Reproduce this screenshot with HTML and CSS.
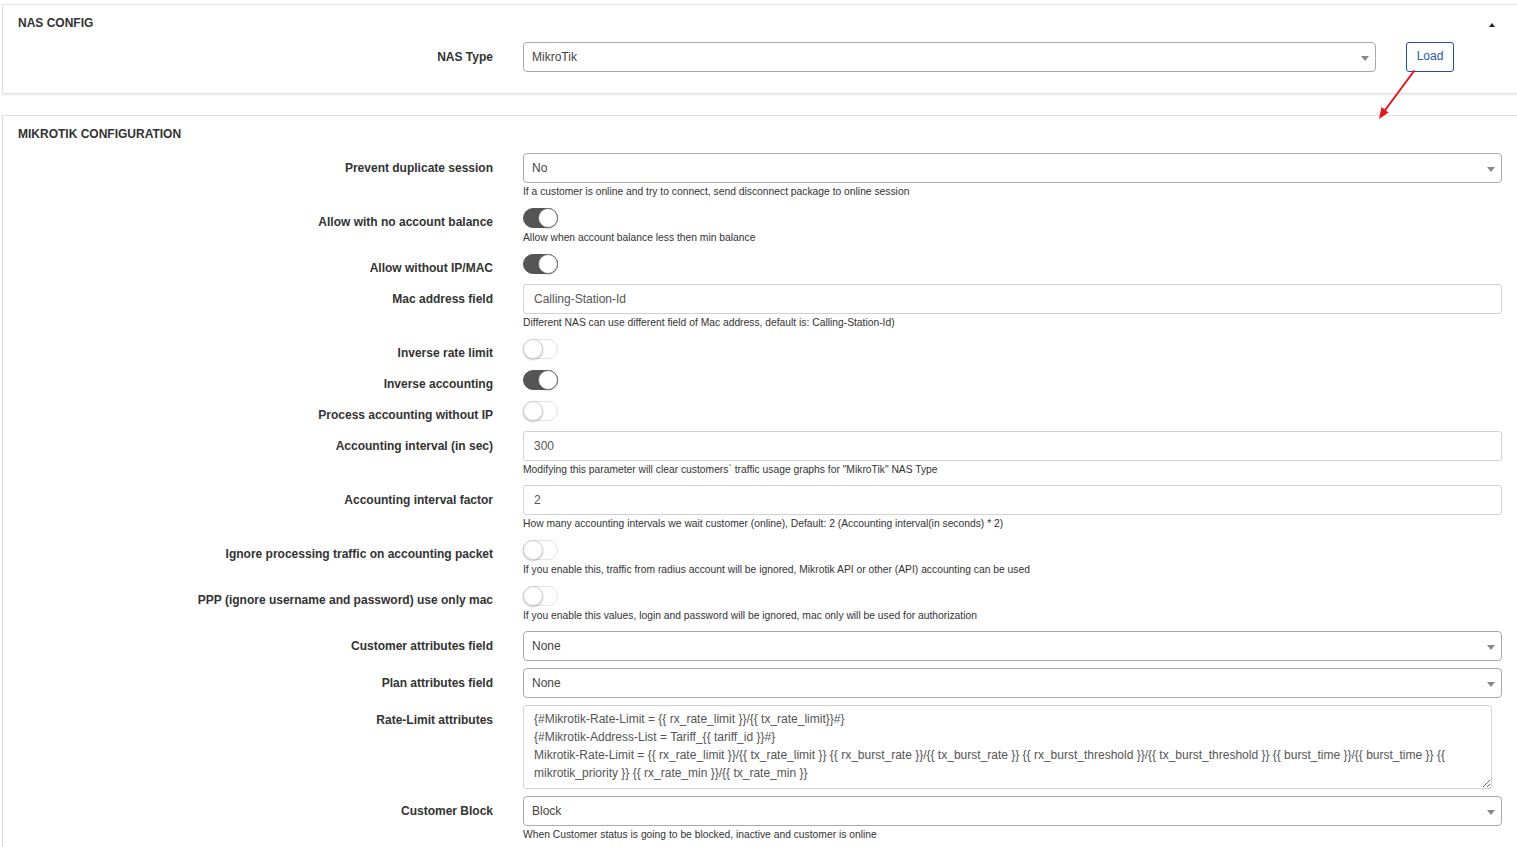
FILE: index.html
```html
<!DOCTYPE html>
<html>
<head>
<meta charset="utf-8">
<link rel="stylesheet" href="styles.css">
</head>
<body>
<div class="page">
  <section class="panel">
    <div class="panel-head">
      <h2>NAS CONFIG</h2>
      <i class="caret-up"></i>
    </div>
    <div class="panel-body first">
      <div class="row">
        <label class="lbl">NAS Type</label>
        <div class="ctl ctl-inline">
          <div class="select narrow"><span>MikroTik</span><i class="arrow"></i></div>
          <button class="btn-load">Load</button>
        </div>
      </div>
    </div>
  </section>

  <section class="panel">
    <div class="panel-head">
      <h2>MIKROTIK CONFIGURATION</h2>
    </div>
    <div class="panel-body">
      <div class="row">
        <label class="lbl">Prevent duplicate session</label>
        <div class="ctl">
          <div class="select"><span>No</span><i class="arrow"></i></div>
          <div class="help">If a customer is online and try to connect, send disconnect package to online session</div>
        </div>
      </div>
      <div class="row">
        <label class="lbl">Allow with no account balance</label>
        <div class="ctl">
          <div class="toggle on"><span class="knob"></span></div>
          <div class="help">Allow when account balance less then min balance</div>
        </div>
      </div>
      <div class="row">
        <label class="lbl">Allow without IP/MAC</label>
        <div class="ctl">
          <div class="toggle on"><span class="knob"></span></div>
        </div>
      </div>
      <div class="row">
        <label class="lbl">Mac address field</label>
        <div class="ctl">
          <div class="input">Calling-Station-Id</div>
          <div class="help">Different NAS can use different field of Mac address, default is: Calling-Station-Id)</div>
        </div>
      </div>
      <div class="row">
        <label class="lbl">Inverse rate limit</label>
        <div class="ctl">
          <div class="toggle"><span class="knob"></span></div>
        </div>
      </div>
      <div class="row">
        <label class="lbl">Inverse accounting</label>
        <div class="ctl">
          <div class="toggle on"><span class="knob"></span></div>
        </div>
      </div>
      <div class="row">
        <label class="lbl">Process accounting without IP</label>
        <div class="ctl">
          <div class="toggle"><span class="knob"></span></div>
        </div>
      </div>
      <div class="row">
        <label class="lbl">Accounting interval (in sec)</label>
        <div class="ctl">
          <div class="input">300</div>
          <div class="help">Modifying this parameter will clear customers` traffic usage graphs for "MikroTik" NAS Type</div>
        </div>
      </div>
      <div class="row">
        <label class="lbl">Accounting interval factor</label>
        <div class="ctl">
          <div class="input">2</div>
          <div class="help">How many accounting intervals we wait customer (online), Default: 2 (Accounting interval(in seconds) * 2)</div>
        </div>
      </div>
      <div class="row">
        <label class="lbl">Ignore processing traffic on accounting packet</label>
        <div class="ctl">
          <div class="toggle"><span class="knob"></span></div>
          <div class="help">If you enable this, traffic from radius account will be ignored, Mikrotik API or other (API) accounting can be used</div>
        </div>
      </div>
      <div class="row">
        <label class="lbl">PPP (ignore username and password) use only mac</label>
        <div class="ctl">
          <div class="toggle"><span class="knob"></span></div>
          <div class="help">If you enable this values, login and password will be ignored, mac only will be used for authorization</div>
        </div>
      </div>
      <div class="row">
        <label class="lbl">Customer attributes field</label>
        <div class="ctl">
          <div class="select"><span>None</span><i class="arrow"></i></div>
        </div>
      </div>
      <div class="row">
        <label class="lbl">Plan attributes field</label>
        <div class="ctl">
          <div class="select"><span>None</span><i class="arrow"></i></div>
        </div>
      </div>
      <div class="row">
        <label class="lbl">Rate-Limit attributes</label>
        <div class="ctl">
          <textarea class="area" readonly>{#Mikrotik-Rate-Limit = {{ rx_rate_limit }}/{{ tx_rate_limit}}#}
{#Mikrotik-Address-List = Tariff_{{ tariff_id }}#}
Mikrotik-Rate-Limit = {{ rx_rate_limit }}/{{ tx_rate_limit }} {{ rx_burst_rate }}/{{ tx_burst_rate }} {{ rx_burst_threshold }}/{{ tx_burst_threshold }} {{ burst_time }}/{{ burst_time }} {{ mikrotik_priority }} {{ rx_rate_min }}/{{ tx_rate_min }}</textarea>
        </div>
      </div>
      <div class="row">
        <label class="lbl">Customer Block</label>
        <div class="ctl">
          <div class="select"><span>Block</span><i class="arrow"></i></div>
          <div class="help">When Customer status is going to be blocked, inactive and customer is online</div>
        </div>
      </div>
    </div>
  </section>
</div>

<svg class="annot-arrow" width="60" height="70" viewBox="0 0 60 70">
  <line x1="44" y1="11" x2="13" y2="53" stroke="#e8141b" stroke-width="2" stroke-linecap="round"/>
  <polygon points="9,59 18.5,52.5 11.5,47" fill="#e8141b"/>
</svg>
</body>
</html>
```

FILE: styles.css
```css
* { box-sizing: border-box; }

html, body {
  margin: 0;
  padding: 0;
  background: #ffffff;
  overflow: hidden;
}

body {
  font-family: "Liberation Sans", Arial, sans-serif;
  color: #333333;
  font-size: 12px;
  position: relative;
}

.page {
  padding: 4px 0 0 2px;
  width: 1540px;
}

.panel {
  width: 1517px;
  background: #ffffff;
  border: 1px solid #e1e1e1;
  box-shadow: 0 1px 2px rgba(0, 0, 0, 0.08);
  padding: 0 16px 0 15px;
}

.panel + .panel {
  margin-top: 21px;
}

.panel-head {
  display: flex;
  justify-content: space-between;
  align-items: center;
  padding: 11px 0 12px 0;
}

.panel-head h2 {
  margin: 0;
  font-size: 12px;
  line-height: 14px;
  font-weight: bold;
  color: #333333;
}

.caret-up {
  display: block;
  width: 0;
  height: 0;
  border-left: 3.5px solid transparent;
  border-right: 3.5px solid transparent;
  border-bottom: 4px solid #222222;
  margin: 4px 7px 0 0;
}

.panel-body.first {
  padding-bottom: 14px;
}

.row {
  display: grid;
  grid-template-columns: 475px 1fr;
  column-gap: 30px;
  margin-bottom: 7px;
}

.lbl {
  text-align: right;
  font-weight: bold;
  font-size: 12px;
  line-height: 14px;
  padding: 8px 0 2px 0;
  color: #333333;
}

.ctl {
  min-width: 0;
}

.ctl-inline {
  display: flex;
  align-items: flex-start;
  padding-right: 48px;
}

.select {
  height: 30px;
  border: 1px solid #aaaaaa;
  border-radius: 4px;
  display: flex;
  align-items: center;
  justify-content: space-between;
  padding: 0 6px 0 8px;
  font-size: 12px;
  color: #444444;
  background: #ffffff;
}

.select.narrow {
  flex: 1;
}

.arrow {
  display: block;
  width: 0;
  height: 0;
  border-left: 4px solid transparent;
  border-right: 4px solid transparent;
  border-top: 5px solid #888888;
  margin-top: 2px;
}

.btn-load {
  margin-left: 30px;
  width: 48px;
  height: 30px;
  border: 1px solid #1f4ea3;
  border-radius: 3px;
  background: #ffffff;
  color: #2a58a8;
  font-family: "Liberation Sans", Arial, sans-serif;
  font-size: 12px;
  padding: 0 0 2px 0;
}

.input {
  height: 30px;
  border: 1px solid #d2d2d2;
  border-radius: 3px;
  padding: 0 10px;
  display: flex;
  align-items: center;
  font-size: 12px;
  color: #555555;
}

.help {
  font-size: 10.3px;
  line-height: 12px;
  padding-top: 3px;
  margin-bottom: 2px;
  color: #333333;
}

.toggle {
  width: 35px;
  height: 20px;
  margin: 1px 0;
  border-radius: 10px;
  border: 1px solid #e3e3e3;
  background: #ffffff;
  display: flex;
  align-items: center;
  justify-content: flex-start;
}

.toggle.on {
  background: #555555;
  border-color: #555555;
  justify-content: flex-end;
}

.knob {
  display: block;
  width: 20px;
  height: 20px;
  margin: -1px;
  border-radius: 50%;
  background: #ffffff;
  border: 1px solid #d0d0d0;
  box-shadow: 0 1px 2px rgba(0, 0, 0, 0.25);
}

.toggle.on .knob {
  border-color: #777777;
  box-shadow: 0 1px 2px rgba(0, 0, 0, 0.2);
}

.area {
  display: block;
  width: calc(100% - 10px);
  height: 84px;
  border: 1px solid #d2d2d2;
  border-radius: 3px;
  padding: 4px 10px;
  font-family: "Liberation Sans", Arial, sans-serif;
  font-size: 12px;
  line-height: 18px;
  color: #555555;
  resize: vertical;
  overflow: hidden;
  outline: none;
}

.annot-arrow {
  position: absolute;
  left: 1370px;
  top: 60px;
}
```
